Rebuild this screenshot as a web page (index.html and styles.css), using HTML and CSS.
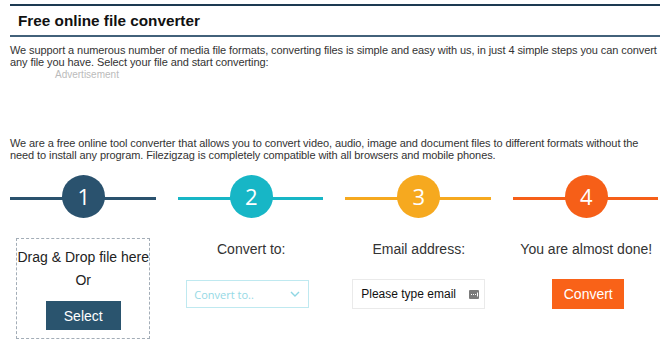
FILE: index.html
```html
<!DOCTYPE html>
<html lang="en">
<head>
    <meta charset="UTF-8">
    <title>Free online file converter</title>
    <link rel="stylesheet" href="styles.css">
</head>
<body>
    <div class="container">
        <!-- Page title -->
        <div class="page-head">
            <h1>Free online file converter</h1>
        </div>

        <p class="intro">We support a numerous number of media file formats, converting files is simple and easy with us, in just 4 simple steps you can convert any file you have. Select your file and start converting:</p>

        <div class="ad">
            <span>Advertisement</span>
        </div>

        <p class="intro">We are a free online tool converter that allows you to convert video, audio, image and document files to different formats without the need to install any program. Filezigzag is completely compatible with all browsers and mobile phones.</p>

        <!-- Converter steps -->
        <div class="steps">
            <div class="step step-1">
                <div class="step-head"><span class="num">1</span></div>
                <div class="step-body">
                    <div class="drop-box">
                        <div class="drop-text">Drag &amp; Drop file here</div>
                        <div class="drop-text">Or</div>
                        <button type="button" class="btn-select">Select</button>
                    </div>
                </div>
            </div>

            <div class="step step-2">
                <div class="step-head"><span class="num">2</span></div>
                <div class="step-body">
                    <div class="label">Convert to:</div>
                    <div class="dropdown">
                        <span>Convert to..</span>
                        <svg width="10" height="6" viewBox="0 0 10 6"><path d="M1 1 L5 5 L9 1" fill="none" stroke="#8fd6e3" stroke-width="1.4"/></svg>
                    </div>
                </div>
            </div>

            <div class="step step-3">
                <div class="step-head"><span class="num">3</span></div>
                <div class="step-body">
                    <div class="label">Email address:</div>
                    <div class="email">
                        <span>Please type email</span>
                        <svg width="10" height="9" viewBox="0 0 10 9"><rect width="10" height="9" rx="1" fill="#7b7b7b"/><path d="M2 4.5h1M4 4.5h1M6 4.5h1" stroke="#fff" stroke-width="1"/><path d="M8.5 2.5v4" stroke="#fff" stroke-width="1"/></svg>
                    </div>
                </div>
            </div>

            <div class="step step-4">
                <div class="step-head"><span class="num">4</span></div>
                <div class="step-body">
                    <div class="label">You are almost done!</div>
                    <button type="button" class="btn-convert">Convert</button>
                </div>
            </div>
        </div>
    </div>
</body>
</html>
```

FILE: styles.css
```css
/* Base */
* {
    margin: 0;
    padding: 0;
    box-sizing: border-box;
}

body {
    font-family: "Liberation Sans", Arial, sans-serif;
    color: #333;
    background: #fff;
}

.container {
    padding: 0 10px;
}

/* Title bar */
.page-head {
    margin-top: 4px;
    border-top: 2px solid #1d3a52;
    border-bottom: 2px solid #42617a;
    padding: 5px 8px 4px;
}

.page-head h1 {
    font-size: 15.3px;
    line-height: 20px;
    font-weight: bold;
    color: #111;
}

.intro {
    font-size: 11px;
    line-height: 12px;
    letter-spacing: -0.09px;
    margin-top: 7px;
}

.ad {
    height: 69px;
    padding: 2px 0 0 45px;
}

.ad span {
    display: block;
    font-size: 10px;
    line-height: 10px;
    color: #bbb;
}

.ad + .intro {
    margin-top: 0;
}

/* Steps */
.steps {
    display: grid;
    grid-template-columns: repeat(4, 1fr);
    margin: 14px -10px 0;
}

.step {
    padding: 0 10px;
    text-align: center;
}

.step-head {
    position: relative;
    height: 43px;
    display: flex;
    justify-content: center;
    align-items: center;
}

.step-head::before {
    content: "";
    position: absolute;
    left: 0;
    right: 2px;
    top: 22px;
    height: 3px;
    background: var(--c);
}

.num {
    position: relative;
    width: 43px;
    height: 43px;
    border-radius: 50%;
    background: var(--c);
    color: #fff;
    font-family: "Open Sans", sans-serif;
    font-size: 22px;
    line-height: 43px;
}

.step-1 { --c: #2a526e; }
.step-2 { --c: #17b6c6; }
.step-3 { --c: #f6a91f; }
.step-4 { --c: #f65f18; }

.step-body {
    padding-top: 20px;
    display: flex;
    flex-direction: column;
    align-items: center;
}

/* Step 1 */
.drop-box {
    width: 134px;
    margin-left: -1px;
    border: 1px dashed #a3adb7;
    padding: 7px 0 8px;
    display: flex;
    flex-direction: column;
    align-items: center;
}

.drop-text {
    font-size: 14px;
    line-height: 23px;
    color: #222;
    white-space: nowrap;
}

.btn-select {
    margin-top: 9px;
    width: 75px;
    height: 29px;
    border: none;
    background: #2a546e;
    color: #fff;
    font-family: inherit;
    font-size: 14px;
}

/* Steps 2-4 */
.label {
    font-size: 14px;
    line-height: 20px;
    padding-top: 1px;
    color: #333;
}

.dropdown {
    margin: 21px 7px 0 0;
    width: 123px;
    height: 28px;
    border: 1px solid #bfe9f0;
    display: flex;
    align-items: center;
    justify-content: space-between;
    padding: 0 8px 0 7px;
    font-family: "Open Sans", sans-serif;
    font-size: 11px;
    color: #95d9e5;
}

.email {
    margin-top: 20px;
    width: 133px;
    height: 30px;
    border: 1px solid #eaeaea;
    display: flex;
    align-items: center;
    justify-content: space-between;
    padding: 0 5px 0 8px;
    font-size: 12px;
    color: #111;
}

.btn-convert {
    margin: 20px 0 0 4px;
    width: 72px;
    height: 30px;
    border: none;
    background: #f96218;
    color: #fff;
    font-family: inherit;
    font-size: 14px;
}
```
